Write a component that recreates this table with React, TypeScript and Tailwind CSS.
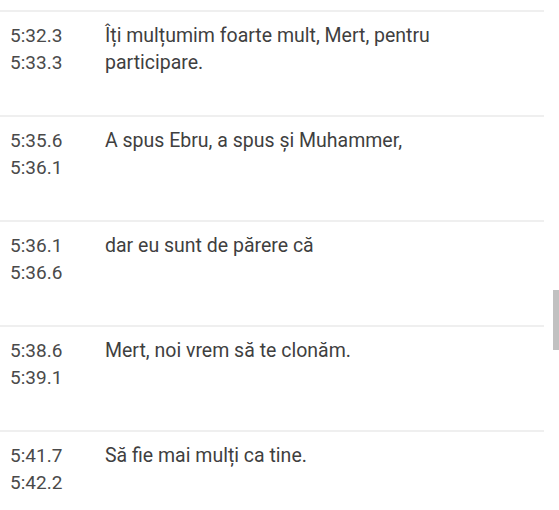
const cues = [
  { start: "5:32.3", end: "5:33.3", text: "Îți mulțumim foarte mult, Mert, pentru participare." },
  { start: "5:35.6", end: "5:36.1", text: "A spus Ebru, a spus și Muhammer," },
  { start: "5:36.1", end: "5:36.6", text: "dar eu sunt de părere că" },
  { start: "5:38.6", end: "5:39.1", text: "Mert, noi vrem să te clonăm." },
  { start: "5:41.7", end: "5:42.2", text: "Să fie mai mulți ca tine." },
];

export default function App() {
  return (
    <div className="relative h-[510px] w-[559px] overflow-hidden bg-white font-['Roboto',sans-serif] leading-[27px] text-[#3f3f3f]">
      <div className="h-[10px]" />
      <div className="w-[544px]">
        {cues.map((cue) => (
          <div key={cue.start + cue.text} className="flex h-[105px] border-t-2 border-[#efefef] pt-[10px]">
            <div className="w-[105px] shrink-0 pl-[10px] text-[19px] text-[#4a4a4a]">
              <div>{cue.start}</div>
              <div>{cue.end}</div>
            </div>
            <div className="flex-1 pr-[24px] text-[19.5px]">{cue.text}</div>
          </div>
        ))}
      </div>

      {/* scrollbar thumb */}
      <div className="absolute left-[553px] top-[290px] h-[60px] w-[6px] bg-[#c1c1c1]" />
    </div>
  );
}
